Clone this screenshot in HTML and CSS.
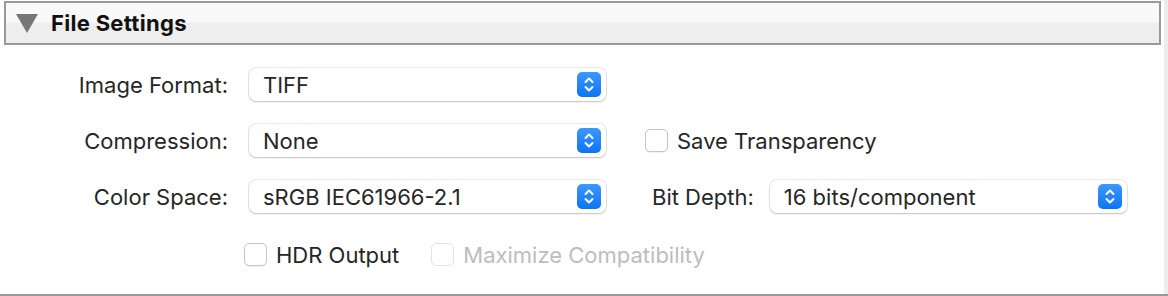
FILE: index.html
```html
<!DOCTYPE html>
<html lang="en">
<head>
    <meta charset="UTF-8">
    <title>File Settings</title>
    <link rel="stylesheet" href="styles.css">
</head>
<body>
<div class="page">
    <div class="panel">
        <div class="panel-header">
            <svg class="disclosure" width="22" height="19" viewBox="0 0 22 19">
                <polygon points="0,0 22,0 11,19" fill="#777"/>
            </svg>
            <h2>File Settings</h2>
        </div>
        <div class="panel-body">
            <div class="row">
                <label class="row-label">Image Format:</label>
                <div class="popup">
                    <span>TIFF</span>
                    <span class="stepper">
                        <svg width="12" height="17" viewBox="0 0 12 17"><path d="M2.5 6 L6 2.5 L9.5 6 M2.5 11 L6 14.5 L9.5 11" fill="none" stroke="#fff" stroke-width="2" stroke-linecap="round" stroke-linejoin="round"/></svg>
                    </span>
                </div>
            </div>
            <div class="row">
                <label class="row-label">Compression:</label>
                <div class="popup">
                    <span>None</span>
                    <span class="stepper">
                        <svg width="12" height="17" viewBox="0 0 12 17"><path d="M2.5 6 L6 2.5 L9.5 6 M2.5 11 L6 14.5 L9.5 11" fill="none" stroke="#fff" stroke-width="2" stroke-linecap="round" stroke-linejoin="round"/></svg>
                    </span>
                </div>
                <label class="check transparency"><span class="box"></span>Save Transparency</label>
            </div>
            <div class="row">
                <label class="row-label">Color Space:</label>
                <div class="popup">
                    <span>sRGB IEC61966-2.1</span>
                    <span class="stepper">
                        <svg width="12" height="17" viewBox="0 0 12 17"><path d="M2.5 6 L6 2.5 L9.5 6 M2.5 11 L6 14.5 L9.5 11" fill="none" stroke="#fff" stroke-width="2" stroke-linecap="round" stroke-linejoin="round"/></svg>
                    </span>
                </div>
                <label class="side-label">Bit Depth:</label>
                <div class="popup">
                    <span>16 bits/component</span>
                    <span class="stepper">
                        <svg width="12" height="17" viewBox="0 0 12 17"><path d="M2.5 6 L6 2.5 L9.5 6 M2.5 11 L6 14.5 L9.5 11" fill="none" stroke="#fff" stroke-width="2" stroke-linecap="round" stroke-linejoin="round"/></svg>
                    </span>
                </div>
            </div>
            <div class="row checks">
                <label class="check"><span class="box"></span>HDR Output</label>
                <label class="check disabled"><span class="box"></span>Maximize Compatibility</label>
            </div>
        </div>
    </div>
    <div class="scroll-strip"></div>
</div>
</body>
</html>
```
FILE: styles.css
```css
body {
    margin: 0;
    font-family: Inter, "Noto Sans", sans-serif;
    color: #262626;
    background: #fff;
}
.page {
    display: flex;
    width: 1168px;
    height: 294px;
    border-bottom: 2px solid #999;
}
.panel {
    flex: 1;
    padding: 1px 3px 0 4px;
}
.scroll-strip {
    width: 4px;
    background: #ececec;
}
.panel-header {
    height: 40px;
    border: 2px solid #999;
    background: linear-gradient(#f9f9f9 0, #f9f9f9 19px, #eeeeee 20px, #eeeeee 100%);
    display: flex;
    align-items: center;
}
.disclosure {
    margin-left: 10px;
    margin-right: 13px;
}
.panel-header h2 {
    margin: 0;
    font-size: 22px;
    font-weight: 700;
    color: #111;
    letter-spacing: 0.3px;
}
.panel-body {
    padding-top: 23px;
    margin-left: -4px;
    display: flex;
    flex-direction: column;
    gap: 23px;
}
.row {
    display: flex;
    align-items: center;
    height: 33px;
    font-size: 22px;
}
.row-label {
    width: 228px;
    text-align: right;
    margin-right: 21px;
}
.popup {
    width: 357px;
    height: 33px;
    box-sizing: border-box;
    background: #fff;
    border-radius: 7px;
    box-shadow: 0 0 0 1px rgba(0, 0, 0, 0.08), 0 1px 2px rgba(0, 0, 0, 0.18);
    display: flex;
    align-items: center;
    justify-content: space-between;
    padding: 0 5px 0 14px;
}
.stepper {
    width: 24px;
    height: 25px;
    border-radius: 5px;
    background: linear-gradient(#3d98fd, #0b74f6);
    display: flex;
    align-items: center;
    justify-content: center;
}
.side-label {
    margin-left: 46px;
    margin-right: 16px;
}
.check {
    display: flex;
    align-items: center;
}
.check .box {
    width: 21px;
    height: 21px;
    border: 1px solid #c6c6c6;
    border-radius: 5px;
    background: #fff;
    box-shadow: 0 1px 1px rgba(0, 0, 0, 0.06);
    margin-right: 9px;
}
.transparency {
    margin-left: 39px;
}
.row.checks {
    padding-left: 244px;
    margin-top: 2px;
}
.check.disabled {
    margin-left: 32px;
    color: #bdbdbd;
}
.check.disabled .box {
    border-color: #e4e4e4;
    box-shadow: none;
}
```
